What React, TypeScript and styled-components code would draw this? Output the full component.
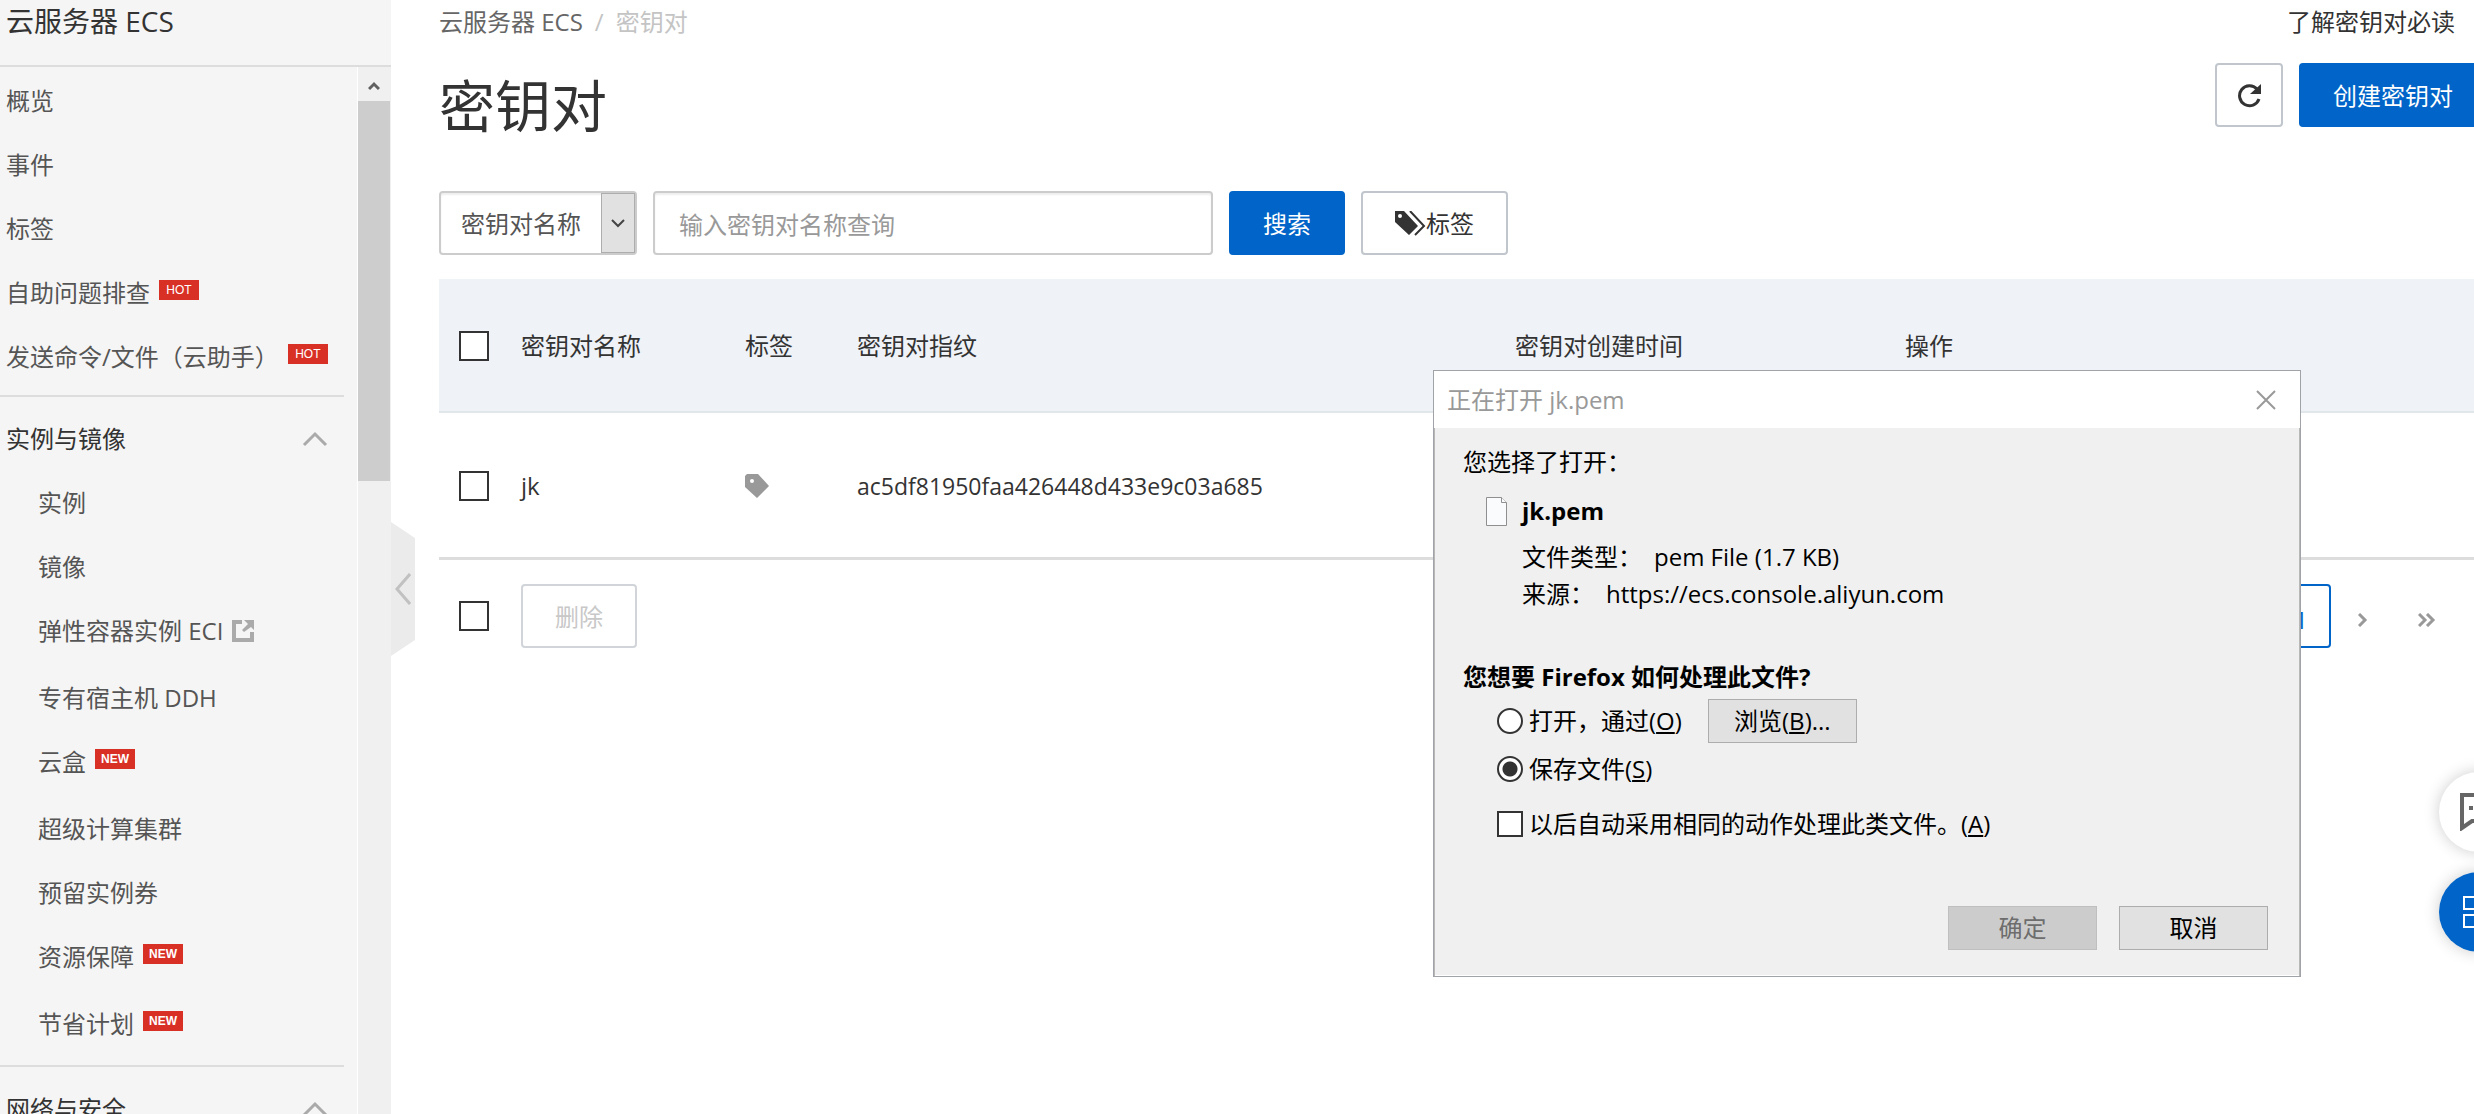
import React from 'react';
import styled, { createGlobalStyle } from 'styled-components';

const GlobalStyle = createGlobalStyle`
  *, *::before, *::after { box-sizing: border-box; }
  body {
    margin: 0;
    overflow: hidden;
    background: #fff;
    color: #333;
    font-family: "Open Sans", "Noto Sans CJK SC", sans-serif;
    font-size: 24px;
    line-height: 32px;
  }
  button, input, select { font: inherit; color: inherit; margin: 0; }
  a { color: inherit; text-decoration: none; }
  ul { list-style: none; margin: 0; padding: 0; }
  svg { display: block; flex: none; }
`;

const Page = styled.div`
  display: grid;
  grid-template-columns: 391px minmax(0, 1fr);
  height: 100vh;
`;

/* Sidebar */

const Sidebar = styled.aside`
  display: flex;
  flex-direction: column;
  min-height: 0;
  background: #f5f5f5;
`;

const SidebarTitle = styled.h2`
  flex: none;
  margin: 0;
  height: 67px;
  padding-left: 6px;
  border-bottom: 2px solid #ddd;
  font-size: 28px;
  font-weight: 400;
  line-height: 42px;
`;

const SidebarBody = styled.div`
  display: flex;
  flex: 1;
  min-height: 0;
`;

const Nav = styled.nav`
  flex: 1;
  overflow: hidden;
  padding-top: 2px;
`;

const NavGroup = styled.section`
  margin: 6px 13px 0 0;
  padding-top: 10px;
  border-top: 2px solid #ddd;
`;

const GroupTitle = styled.button`
  display: flex;
  align-items: center;
  justify-content: space-between;
  width: 100%;
  height: 64px;
  padding: 0 16px 0 6px;
  border: 0;
  background: none;
  color: #333;
  line-height: 64px;
`;

const NavItem = styled.li<{ $nested?: boolean; $marked?: boolean }>`
  padding-left: ${(p) => (p.$nested ? 38 : 6)}px;
  padding-bottom: ${(p) => (p.$marked ? 3 : 0)}px;
`;

const NavLink = styled.a`
  display: flex;
  align-items: flex-start;
  gap: 9px;
  height: 64px;
  color: #555;
  line-height: 64px;
  white-space: nowrap;
`;

const Badge = styled.span<{ $bold?: boolean }>`
  width: 40px;
  height: 20px;
  margin-top: 19px;
  background: #d93026;
  color: #fff;
  font-family: "Liberation Sans", Arial, sans-serif;
  font-size: 12px;
  font-weight: ${(p) => (p.$bold ? 700 : 400)};
  line-height: 21px;
  text-align: center;
`;

const ExternalMark = styled.span`
  padding-top: 21px;
`;

const Scrollbar = styled.div`
  display: flex;
  flex-direction: column;
  width: 34px;
  border-left: 1px solid #fff;
  background: #f0f0f0;
  padding-right: 1px;
`;

const ScrollArrow = styled.div`
  display: flex;
  align-items: center;
  justify-content: center;
  height: 34px;
  padding-top: 4px;
`;

const ScrollThumb = styled.div`
  height: 380px;
  background: #cdcdcd;
`;

/* Main column */

const Main = styled.main`
  position: relative;
  min-width: 0;
  overflow: hidden;
`;

const CollapseHandle = styled.button`
  position: absolute;
  left: 0;
  top: 522px;
  display: flex;
  align-items: center;
  justify-content: center;
  width: 24px;
  height: 134px;
  padding: 0;
  border: 0;
  background: #ebebeb;
  clip-path: polygon(0 0, 100% 12%, 100% 88%, 0 100%);
`;

const Content = styled.div`
  margin-right: -13px;
  padding-left: 48px;
`;

const TopRow = styled.div`
  display: flex;
  justify-content: space-between;
  height: 63px;
  padding-right: 32px;
  line-height: 44px;
`;

const Breadcrumb = styled.nav`
  display: flex;
  gap: 12px;
  color: #c4c4c4;
  a { color: #666; }
`;

const TitleRow = styled.header`
  display: flex;
  align-items: flex-start;
  justify-content: space-between;
  height: 128px;
`;

const PageTitle = styled.h1`
  margin: 0;
  padding-top: 10px;
  font-size: 56px;
  font-weight: 400;
  line-height: 64px;
`;

const Row = styled.div`
  display: flex;
  gap: 16px;
`;

const Button = styled.button<{ $primary?: boolean; $pad?: number }>`
  display: flex;
  align-items: center;
  justify-content: center;
  height: 64px;
  padding: 2px ${(p) => p.$pad ?? 32}px 0;
  border: 2px solid ${(p) => (p.$primary ? '#0064c8' : '#c0c6cc')};
  border-radius: 4px;
  background: ${(p) => (p.$primary ? '#0064c8' : '#fff')};
  color: ${(p) => (p.$primary ? '#fff' : '#333')};
  white-space: nowrap;
  &:disabled {
    border-color: #d1d5d9;
    color: #c8c8c8;
  }
`;

const SelectBox = styled.div`
  position: relative;
  width: 198px;
  height: 64px;
`;

const Select = styled.select`
  appearance: none;
  width: 100%;
  height: 100%;
  padding: 2px 36px 0 20px;
  border: 2px solid #ccc;
  border-radius: 4px;
  background: #fff;
  box-shadow: inset 0 2px 2px rgba(0, 0, 0, 0.07);
  color: #555;
`;

const SelectArrow = styled.span`
  position: absolute;
  top: 2px;
  right: 2px;
  bottom: 2px;
  display: flex;
  align-items: center;
  justify-content: center;
  width: 34px;
  border: 1px solid #adadad;
  background: #e1e1e1;
  pointer-events: none;
`;

const SearchInput = styled.input`
  width: 560px;
  height: 64px;
  padding: 2px 24px 0;
  border: 2px solid #ccc;
  border-radius: 4px;
  background: #fff;
  box-shadow: inset 0 2px 2px rgba(0, 0, 0, 0.07);
  &::placeholder { color: #999; opacity: 1; }
`;

const Table = styled.table`
  width: 100%;
  margin-top: 24px;
  border-collapse: separate;
  border-spacing: 0;
  table-layout: fixed;
  th, td {
    padding: 2px 0 0 20px;
    text-align: left;
    font-weight: 400;
  }
  th {
    height: 134px;
    border-bottom: 2px solid #e1e6eb;
    background: #eff2f7;
  }
  td {
    height: 147px;
    border-bottom: 3px solid #ddd;
  }
`;

const Col = styled.col<{ $w?: number }>`
  width: ${(p) => (p.$w ? `${p.$w}px` : 'auto')};
`;

const Fingerprint = styled.span`
  font-size: 23px;
`;

const Check = styled.input<{ $size: number }>`
  appearance: none;
  display: block;
  flex: none;
  width: ${(p) => p.$size}px;
  height: ${(p) => p.$size}px;
  border: 2px solid #333;
  border-radius: ${(p) => (p.type === 'radio' ? '50%' : '0')};
  background: #fff;
  &[type='radio']:checked {
    background: radial-gradient(circle, #333 7px, #fff 8px);
  }
`;

const Footer = styled.div`
  display: flex;
  align-items: center;
  justify-content: space-between;
  margin-top: 24px;
  padding: 0 28px 0 20px;
`;

const BulkActions = styled.div`
  display: flex;
  align-items: center;
  gap: 32px;
`;

const Pagination = styled.nav`
  display: flex;
  align-items: center;
`;

const PageButton = styled.button<{ $current?: boolean }>`
  display: flex;
  align-items: center;
  justify-content: center;
  width: ${(p) => (p.$current ? 60 : 64)}px;
  height: 64px;
  padding: 8px 0 0;
  border: ${(p) => (p.$current ? '2px solid #0064c8' : '0')};
  border-radius: 4px;
  background: #fff;
  color: ${(p) => (p.$current ? '#0064c8' : '#999')};
`;

/* Floating helpers */

const FloatStack = styled.div`
  position: fixed;
  right: -45px;
  top: 772px;
  display: flex;
  flex-direction: column;
  gap: 20px;
`;

const FloatButton = styled.button<{ $primary?: boolean }>`
  display: flex;
  align-items: center;
  justify-content: center;
  width: 80px;
  height: 80px;
  padding: 0;
  border: 0;
  border-radius: 50%;
  background: ${(p) => (p.$primary ? '#0064c8' : '#fff')};
  box-shadow: 0 0 16px rgba(0, 0, 0, 0.2);
`;

/* Download dialog */

const Dialog = styled.div`
  position: fixed;
  left: 1433px;
  top: 370px;
  width: 868px;
  border: 1px solid #a0a3a8;
  background: #f0f0f0;
  color: #000;
`;

const DialogBar = styled.div`
  display: flex;
  align-items: center;
  justify-content: space-between;
  height: 57px;
  padding: 0 24px 0 13px;
  background: #fff;
  color: #999;
`;

const CloseButton = styled.button`
  padding: 0;
  border: 0;
  background: none;
`;

const DialogBody = styled.div`
  display: flex;
  flex-direction: column;
  padding: 18px 31px 26px 28px;
  border: solid #b8b8b8;
  border-width: 0 1px;
  box-shadow: inset 0 -1px #fff;
`;

const FileInfo = styled.div`
  display: grid;
  grid-template-columns: 21px 1fr;
  align-items: start;
  column-gap: 15px;
  margin: 17px 0 0 23px;
`;

const FileIconCell = styled.span`
  padding-top: 2px;
`;

const FileName = styled.strong`
  margin-bottom: 11px;
  font-weight: 700;
`;

const FileMeta = styled.dl`
  grid-column: 2;
  margin: 0;
  line-height: 37px;
  div { display: flex; gap: 12px; }
  dt, dd { margin: 0; }
`;

const Question = styled.h3`
  margin: 49px 0 4px;
  font-size: 24px;
  font-weight: 700;
  line-height: 32px;
`;

const Options = styled.div`
  display: flex;
  flex-direction: column;
  padding-left: 34px;
`;

const OptionRow = styled.div<{ $height: number }>`
  display: flex;
  align-items: center;
  gap: 26px;
  height: ${(p) => p.$height}px;
`;

const OptionLabel = styled.label`
  display: flex;
  align-items: center;
  gap: 6px;
  white-space: nowrap;
`;

const NativeButton = styled.button`
  width: 149px;
  height: 44px;
  padding: 0;
  border: 1px solid #adadad;
  background: #e1e1e1;
  &:disabled {
    border-color: #bfbfbf;
    background: #ccc;
    color: #6d6d6d;
  }
`;

const DialogActions = styled.div`
  display: flex;
  justify-content: flex-end;
  gap: 22px;
  margin-top: 51px;
`;

/* Icons */

const ChevronUp = () => (
  <svg width="26" height="18" viewBox="0 0 26 18" fill="none" stroke="#aaa" strokeWidth="3">
    <path d="M2 15 13 4l11 11" />
  </svg>
);

const ExternalIcon = () => (
  <svg width="22" height="22" viewBox="0 0 22 22" fill="#aaa">
    <path d="M0 0h10v4H4v14h14v-6h4v10H0z" />
    <path d="M12 0h10v10l-3-3-7 5-2-2 6-6z" />
  </svg>
);

const TagIcon = () => (
  <svg width="24" height="24" viewBox="0 0 24 24" fill="#999" role="img" aria-label="标签">
    <path fillRule="evenodd" d="M2 0h11l11 12-12 12L0 13V2zM7 5a2 2 0 1 0 0 4 2 2 0 0 0 0-4z" />
  </svg>
);

const TagsIcon = () => (
  <svg width="31" height="26" viewBox="0 0 31 26">
    <path fill="#333" fillRule="evenodd" d="M0 0h9l14 15-9 9L0 11zM5 3a2 2 0 1 0 0 4 2 2 0 0 0 0-4z" />
    <path fill="none" stroke="#333" strokeWidth="2" d="M15 0l14 15-9 9" />
  </svg>
);

const RefreshIcon = () => (
  <svg width="24" height="24" viewBox="0 0 24 24">
    <path fill="none" stroke="#333" strokeWidth="3" d="M20 5A10 10 0 1 0 22 15" />
    <path fill="#333" d="M24 0v10H13z" />
  </svg>
);

const FileIcon = () => (
  <svg width="21" height="29" viewBox="0 0 21 29" fill="#fafbfc" stroke="#8f8f8f">
    <path d="M.5.5h15l5 5v23H.5z" />
    <path d="M15.500.5v5h5" />
  </svg>
);

const navTop = [
  { label: '概览' },
  { label: '事件' },
  { label: '标签' },
  { label: '自助问题排查', hot: true },
  { label: '发送命令/文件（云助手）', hot: true },
];

const navInstances = [
  { label: '实例' },
  { label: '镜像' },
  { label: '弹性容器实例 ECI', external: true },
  { label: '专有宿主机 DDH' },
  { label: '云盒', fresh: true },
  { label: '超级计算集群' },
  { label: '预留实例券' },
  { label: '资源保障', fresh: true },
  { label: '节省计划', fresh: true },
];

const columns = [62, 224, 112, 658, 390];

export default function App() {
  return (
    <Page>
      <GlobalStyle />
      <Sidebar>
        <SidebarTitle>云服务器 ECS</SidebarTitle>
        <SidebarBody>
          <Nav>
            <ul>
              {navTop.map((item) => (
                <NavItem key={item.label}>
                  <NavLink href="#">
                    {item.label}
                    {item.hot && <Badge>HOT</Badge>}
                  </NavLink>
                </NavItem>
              ))}
            </ul>
            <NavGroup>
              <GroupTitle type="button">
                实例与镜像
                <ChevronUp />
              </GroupTitle>
              <ul>
                {navInstances.map((item) => (
                  <NavItem key={item.label} $nested $marked={item.fresh || item.external}>
                    <NavLink href="#">
                      {item.label}
                      {item.fresh && <Badge $bold>NEW</Badge>}
                      {item.external && (
                        <ExternalMark>
                          <ExternalIcon />
                        </ExternalMark>
                      )}
                    </NavLink>
                  </NavItem>
                ))}
              </ul>
            </NavGroup>
            <NavGroup>
              <GroupTitle type="button">
                网络与安全
                <ChevronUp />
              </GroupTitle>
            </NavGroup>
          </Nav>
          <Scrollbar aria-hidden="true">
            <ScrollArrow>
              <svg width="12" height="10" viewBox="0 0 12 10" fill="none" stroke="#606060" strokeWidth="3">
                <path d="M1 8l5-5 5 5" />
              </svg>
            </ScrollArrow>
            <ScrollThumb />
          </Scrollbar>
        </SidebarBody>
      </Sidebar>

      <Main>
        <CollapseHandle type="button" aria-label="收起">
          <svg width="16" height="32" viewBox="0 0 16 32" fill="none" stroke="#c1c1c1" strokeWidth="3">
            <path d="M15 1 2 16l13 15" />
          </svg>
        </CollapseHandle>
        <Content>
          <TopRow>
            <Breadcrumb>
              <a href="#">云服务器 ECS</a>
              <span>/</span>
              <span>密钥对</span>
            </Breadcrumb>
            <a href="#">了解密钥对必读</a>
          </TopRow>
          <TitleRow>
            <PageTitle>密钥对</PageTitle>
            <Row>
              <Button type="button" aria-label="刷新" $pad={20}>
                <RefreshIcon />
              </Button>
              <Button type="button" $primary>
                创建密钥对
              </Button>
            </Row>
          </TitleRow>
          <Row>
            <SelectBox>
              <Select aria-label="查询条件">
                <option>密钥对名称</option>
              </Select>
              <SelectArrow>
                <svg width="14" height="9" viewBox="0 0 14 9" fill="none" stroke="#444" strokeWidth="2">
                  <path d="M1 1l6 6 6-6" />
                </svg>
              </SelectArrow>
            </SelectBox>
            <SearchInput type="text" aria-label="密钥对名称" placeholder="输入密钥对名称查询" />
            <Button type="button" $primary>
              搜索
            </Button>
            <Button type="button">
              <TagsIcon />
              标签
            </Button>
          </Row>

          <Table>
            <colgroup>
              {columns.map((w) => (
                <Col key={w} $w={w} />
              ))}
              <Col />
            </colgroup>
            <thead>
              <tr>
                <th>
                  <Check type="checkbox" $size={30} aria-label="全选" />
                </th>
                <th>密钥对名称</th>
                <th>标签</th>
                <th>密钥对指纹</th>
                <th>密钥对创建时间</th>
                <th>操作</th>
              </tr>
            </thead>
            <tbody>
              <tr>
                <td>
                  <Check type="checkbox" $size={30} aria-label="选择 jk" />
                </td>
                <td>jk</td>
                <td>
                  <TagIcon />
                </td>
                <td>
                  <Fingerprint>ac5df81950faa426448d433e9c03a685</Fingerprint>
                </td>
                <td />
                <td />
              </tr>
            </tbody>
          </Table>

          <Footer>
            <BulkActions>
              <Check type="checkbox" $size={30} aria-label="全选" />
              <Button type="button" disabled>
                删除
              </Button>
            </BulkActions>
            <Pagination aria-label="分页">
              <PageButton type="button" $current>
                1
              </PageButton>
              <PageButton type="button" aria-label="下一页">
                <svg width="10" height="14" viewBox="0 0 10 14" fill="none" stroke="#999" strokeWidth="3">
                  <path d="M1 1l6 6-6 6" />
                </svg>
              </PageButton>
              <PageButton type="button" aria-label="最后一页">
                <svg width="18" height="14" viewBox="0 0 18 14" fill="none" stroke="#999" strokeWidth="3">
                  <path d="M1 1l6 6-6 6M9 1l6 6-6 6" />
                </svg>
              </PageButton>
            </Pagination>
          </Footer>
        </Content>
      </Main>

      <FloatStack>
        <FloatButton type="button" aria-label="反馈">
          <svg width="38" height="38" viewBox="0 0 38 38" fill="none" stroke="#666" strokeWidth="4">
            <path d="M2 2h34v26H12L2 35z" />
            <path d="M9 15h4M17 15h4M25 15h4" />
          </svg>
        </FloatButton>
        <FloatButton type="button" $primary aria-label="应用">
          <svg width="32" height="32" viewBox="0 0 32 32" fill="none" stroke="#fff" strokeWidth="2">
            <path d="M1 1h12v12H1zM19 1h12v12H19zM1 19h12v12H1zM19 19h12v12H19z" />
          </svg>
        </FloatButton>
      </FloatStack>

      <Dialog role="dialog" aria-labelledby="dialog-title">
        <DialogBar>
          <span id="dialog-title">正在打开 jk.pem</span>
          <CloseButton type="button" aria-label="关闭">
            <svg width="20" height="20" viewBox="0 0 20 20" fill="none" stroke="#999" strokeWidth="2">
              <path d="M1 1l18 18M19 1 1 19" />
            </svg>
          </CloseButton>
        </DialogBar>
        <DialogBody>
          <span>您选择了打开：</span>
          <FileInfo>
            <FileIconCell>
              <FileIcon />
            </FileIconCell>
            <FileName>jk.pem</FileName>
            <FileMeta>
              <div>
                <dt>文件类型：</dt>
                <dd>pem File (1.7 KB)</dd>
              </div>
              <div>
                <dt>来源：</dt>
                <dd>https://ecs.console.aliyun.com</dd>
              </div>
            </FileMeta>
          </FileInfo>
          <Question>您想要 Firefox 如何处理此文件?</Question>
          <Options role="radiogroup">
            <OptionRow $height={48}>
              <OptionLabel>
                <Check type="radio" name="action" $size={26} />
                <span>
                  打开，通过(<u>O</u>)
                </span>
              </OptionLabel>
              <NativeButton type="button">
                浏览(<u>B</u>)...
              </NativeButton>
            </OptionRow>
            <OptionRow $height={48}>
              <OptionLabel>
                <Check type="radio" name="action" defaultChecked $size={26} />
                <span>
                  保存文件(<u>S</u>)
                </span>
              </OptionLabel>
            </OptionRow>
            <OptionRow $height={62}>
              <OptionLabel>
                <Check type="checkbox" $size={26} />
                <span>
                  以后自动采用相同的动作处理此类文件。(<u>A</u>)
                </span>
              </OptionLabel>
            </OptionRow>
          </Options>
          <DialogActions>
            <NativeButton type="button" disabled>
              确定
            </NativeButton>
            <NativeButton type="button">取消</NativeButton>
          </DialogActions>
        </DialogBody>
      </Dialog>
    </Page>
  );
}
